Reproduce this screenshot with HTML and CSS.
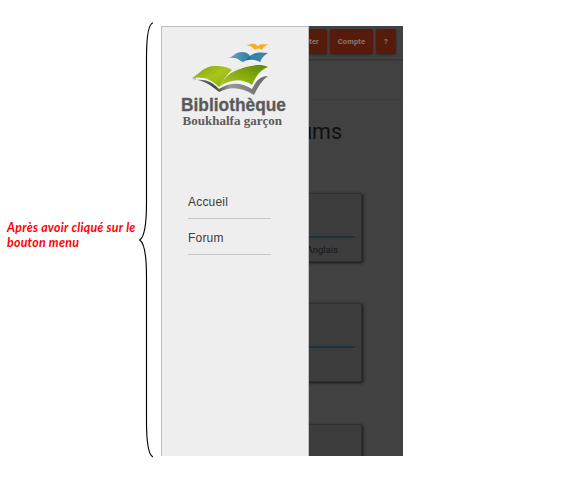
FILE: index.html
```html
<!DOCTYPE html>
<html lang="fr">
<head>
<meta charset="utf-8">
<title>Bibliothèque</title>
<link rel="stylesheet" href="styles.css">
</head>
<body>
<main class="figure">
  <p class="note">Après avoir cliqué sur le<br>bouton menu</p>
  <svg class="brace" viewBox="0 0 15 436" fill="none" stroke="#000" stroke-width="1.15">
    <path d="M14 .7C9 2 7.5 20 7.5 36V181C7.5 199 5.5 215 .7 218C5.500 221 7.500 237 7.500 255V399C7.500 416 9 433 14 435"/>
  </svg>
  <section class="phone">
    <div class="page">
      <header class="topbar">
        <span class="btn connect">Connecter</span>
        <span class="btn account">Compte</span>
        <span class="btn help">?</span>
      </header>
      <div class="banner"></div>
      <h1>Forums</h1>
      <div class="cards">
        <article class="card first"><div class="rule"></div><span>Anglais</span></article>
        <article class="card second"><div class="rule"></div></article>
        <article class="card third"></article>
      </div>
    </div>
    <aside class="drawer">
      <svg class="logo" viewBox="0 0 110 90">
        <defs>
          <linearGradient id="leaf" x1="0" y1="0" x2="1" y2="1">
            <stop offset="0" stop-color="#7e9f0c"/><stop offset=".5" stop-color="#a9c51d"/><stop offset="1" stop-color="#86ac0a"/>
          </linearGradient>
          <linearGradient id="leaf2" x1="1" y1="0" x2="0" y2="1">
            <stop offset="0" stop-color="#5d8507"/><stop offset=".45" stop-color="#83a90b"/><stop offset="1" stop-color="#b2cd2a"/>
          </linearGradient>
          <linearGradient id="shade" x1="0" y1="0" x2="1" y2="0">
            <stop offset="0" stop-color="#888"/><stop offset=".3" stop-color="#444"/><stop offset=".5" stop-color="#999"/><stop offset="1" stop-color="#666"/>
          </linearGradient>
          <linearGradient id="sea" x1="0" y1="0" x2="1" y2="0">
            <stop offset="0" stop-color="#72a9c4"/><stop offset=".5" stop-color="#347ea6"/><stop offset="1" stop-color="#3e86ab"/>
          </linearGradient>
        </defs>
        <path fill="url(#shade)" d="M11 37C23 35 32 40 38 46C48 39 60 40 70 46C74 39 80 34 87 34C81 38 77 45 73 53C61 45 49 44 38 50C30 43 22 38 11 37Z"/>
        <path fill="#f5f5f5" d="M15 36C26 34 34 40 38 45C49 38 60 38 70 43C74 36 79 32 86 31V33C79 34 75 39 71 47C60 40 49 40 38 47C31 40 25 37 15 38Z"/>
        <path fill="url(#leaf)" d="M11 36C18 32 23 24 34 24C42 24 47 25 51 28C46 32 42 38 38 45C30 37 22 34 11 36Z"/>
        <path fill="url(#leaf2)" d="M38 45C46 30 56 28 65 25C73 23 80 22 87 25C79 28 75 34 71 43C61 36 49 37 38 45Z"/>
        <path fill="url(#sea)" d="M47 16C54 14 54 10 61 10C65 10 68 12 69 14C73 10 80 10 87 11C82 14 80 17 79 21C73 18 67 18 62 21C58 17 53 15 47 16Z"/>
        <path fill="#236f98" d="M63 20L69 14L70 18Z"/>
        <path fill="#f8f8f8" d="M52 16C57 16 59 19 62 21C68 18 74 19 79 22L79 20C73 17 67 17 62 20Z"/>
        <path fill="#f5ad21" d="M65 3C69 3 69 1 74 2L77 4C80 1 83 3 88 2C84 4 82 5 81 8C78 6 76 6 74 8C71 4 69 4 65 3Z"/>
        <text class="brand" x="0" y="69" textLength="105" lengthAdjust="spacingAndGlyphs">Bibliothèque</text>
        <text class="place" x="1.500" y="82.700" textLength="99.500" lengthAdjust="spacingAndGlyphs">Boukhalfa garçon</text>
      </svg>
      <nav>
        <a>Accueil</a>
        <a>Forum</a>
      </nav>
    </aside>
  </section>
</main>
</body>
</html>
```

FILE: styles.css
```css
* { box-sizing: border-box; }
body { margin: 0; background: #fff; }
.figure {
  display: flex;
  align-items: flex-start;
  width: 564px;
  height: 500px;
  overflow: hidden;
}
.note {
  width: 133px;
  margin: 220px 0 0;
  padding-left: 7px;
  color: #f00;
  font: italic bold 12.4px/15px Lato, sans-serif;
  letter-spacing: .24px;
  white-space: nowrap;
}
.brace { width: 15px; height: 436px; margin: 22px 0 0 6px; flex: none; }
.phone {
  position: relative;
  flex: none;
  width: 242px;
  height: 430px;
  margin: 26px 0 0 7px;
  overflow: hidden;
  background: #414141;
}
.page { font-family: Roboto, sans-serif; }
.topbar {
  display: flex;
  justify-content: flex-end;
  gap: 3px;
  height: 34px;
  padding: 3px 7px 0 0;
  border-bottom: 1px solid #353535;
  box-shadow: 0 1px 1px #3b3b3b;
}
.btn {
  height: 25px;
  border-radius: 2px;
  background: #571b0b;
  color: #8b7670;
  font: bold 7.5px/25px Roboto, sans-serif;
  letter-spacing: .15px;
  text-align: center;
  box-shadow: 0 1px 2px #292929;
}
.connect { width: 54px; padding-right: 8px; text-align: right; }
.account { width: 43px; }
.help { width: 20px; }
.banner { height: 40px; border-bottom: 1px solid #3c3c3c; }
h1 {
  margin: 18px 61px 0 0;
  color: #101010;
  font: 400 21.5px/28px Roboto, sans-serif;
  text-align: right;
}
.cards {
  display: flex;
  flex-direction: column;
  width: 161px;
  margin: 47px 0 0 40px;
}
.card {
  flex: none;
  padding: 42px 6px 0;
  border: 1px solid #303030;
  border-radius: 2px;
  background: #3c3c3c;
  box-shadow: 1px 1px 3px #161616;
}
.first { height: 69px; margin-bottom: 41px; }
.second { height: 79px; margin-bottom: 42px; }
.third { height: 69px; }
.rule { height: 2px; background: #1d3440; }
.card span {
  display: block;
  padding: 5px 17px 0 0;
  color: #171717;
  font-size: 9.5px;
  line-height: 14px;
  text-align: right;
}
.drawer {
  position: absolute;
  top: 0;
  left: 0;
  width: 148px;
  height: 430px;
  padding: 15px 0 0 19px;
  border: solid #bdbdbd;
  border-width: 1px 1px 0;
  background: #eee;
}
.logo { display: block; width: 110px; height: 90px; }
.brand { font: bold 18px "Liberation Sans", sans-serif; fill: #5a5a5a; stroke: #5a5a5a; stroke-width: .3; }
.place { font: bold 12px "Liberation Serif", serif; fill: #5c5c5c; }
nav { display: flex; flex-direction: column; width: 83px; margin: 51px 0 0 7px; }
nav a {
  height: 36px;
  padding-top: 12px;
  border-bottom: 1px solid #c7c7c7;
  color: #3c3c3c;
  font: 12px/14px "Liberation Sans", sans-serif;
  letter-spacing: .2px;
}
```
